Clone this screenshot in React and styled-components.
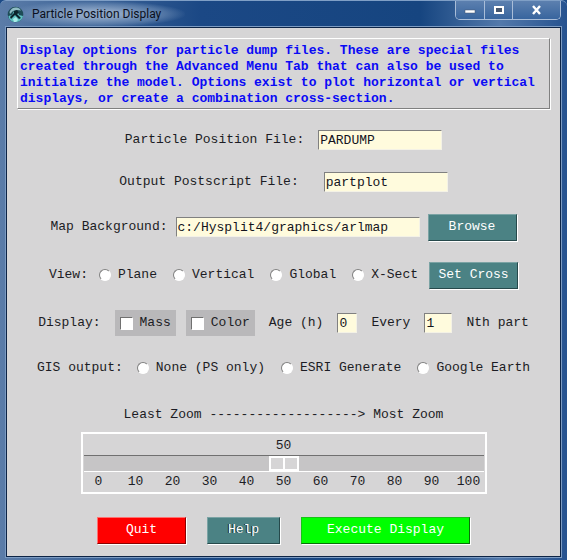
import React, { useState } from 'react';
import styled, { createGlobalStyle } from 'styled-components';

const GlobalStyle = createGlobalStyle`
  *, *::before, *::after { box-sizing: border-box; }
  body { margin: 0; background: #1c4a86; }
  button, input, output { font: inherit; }
`;

const face = '#d6d5d6';
const mono = '"Liberation Mono", "Courier New", monospace';

const Frame = styled.div`
  min-height: 100vh;
  display: flex;
  flex-direction: column;
  padding: 0 6px 3px;
  border-top: 1px solid #7f9fc6;
  border-radius: 6px 6px 0 0;
  background: linear-gradient(90deg, #5b7ca8 0, #1b4885 200px, #164580 420px, #5379ab 500px, #26528f 100%);
  font: 13px/16px ${mono};
  color: #1c1c24;
`;

const TitleBar = styled.header`
  display: flex;
  align-items: flex-start;
  justify-content: space-between;
  height: 26px;
`;

const Title = styled.h1`
  display: flex;
  align-items: center;
  gap: 8px;
  height: 26px;
  margin: 0;
  padding: 0 24px 0 1px;
  background: radial-gradient(ellipse at center, #8ca5c6 20%, #6b8bb499 55%, transparent 72%);
  font: 12px/16px Roboto, "Noto Sans", sans-serif;
  color: #0b1020;
`;

const Controls = styled.div`
  display: flex;
  height: 19px;
  border: 1px solid #a9bdd8;
  border-top: 0;
  border-radius: 0 0 5px 5px;
  overflow: hidden;
`;

const Control = styled.button`
  display: grid;
  place-items: center;
  width: ${(p) => (p.$wide ? 48 : 28)}px;
  padding: 0;
  border: 0;
  border-left: ${(p) => (p.$first ? '0' : '1px solid #a9bdd8')};
  background: linear-gradient(#5c80af, #38659e);
`;

const Client = styled.main`
  flex: 1;
  display: flex;
  flex-direction: column;
  gap: 20px;
  padding: 10px;
  border: 1px solid #0d2446;
  outline: 1px solid #7c9bc2;
  background: ${face};
`;

const Banner = styled.p`
  margin: 0;
  padding: 4px 2px 1px;
  border: 1px solid;
  border-color: #fff #808080 #808080 #fff;
  box-shadow: 1px 1px 0 #fff;
  font-weight: bold;
  color: #0a0af5;
`;

const Row = styled.div`
  display: flex;
  align-items: center;
  justify-content: center;
  gap: ${(p) => p.$gap}px;
  min-height: ${(p) => (p.$tall ? 28 : 22)}px;
  white-space: nowrap;
`;

const RadioGroup = styled.fieldset`
  display: flex;
  align-items: center;
  gap: 16px;
  margin: 0;
  padding: 0;
  border: 0;
`;

const Choice = styled.label`
  display: flex;
  align-items: center;
  gap: 7px;
`;

const TickChoice = styled(Choice)`
  height: 26px;
  padding: 0 5px;
  background: #b9b8ba;
`;

const Radio = styled.input`
  appearance: none;
  width: 12px;
  height: 12px;
  margin: 0;
  border: 1px solid;
  border-color: #808080 #fff #fff #808080;
  border-radius: 50%;
  background: #fff;
  &:checked { background: radial-gradient(#000 0 2px, #fff 3px); }
`;

const Tick = styled.input`
  appearance: none;
  width: 13px;
  height: 13px;
  margin: 0;
  border: 1px solid;
  border-color: #707070 #fff #fff #707070;
  background: #fff;
  &:checked { background: radial-gradient(#000 0 3px, #fff 4px); }
`;

const Ticks = styled.div`
  display: flex;
  gap: 10px;
`;

const Field = styled.input`
  width: ${(p) => p.$width}px;
  height: 20px;
  padding: 0 1px;
  border: 1px solid;
  border-color: #808080 #f4f2e6 #f4f2e6 #808080;
  border-radius: 0;
  background: #fffbdd;
  color: #14141c;
`;

const tones = {
  teal: ['#4b8284', '#7ba3a4', '#26494b'],
  red: ['#ff0000', '#ff7070', '#8c0000'],
  green: ['#00ff00', '#17c417', '#087008'],
};

const PushButton = styled.button`
  min-width: ${(p) => p.$width}px;
  height: 27px;
  padding: 0 7px;
  border: 1px solid;
  border-color: ${(p) => tones[p.$tone][1]} ${(p) => tones[p.$tone][2]} ${(p) => tones[p.$tone][2]} ${(p) => tones[p.$tone][1]};
  border-radius: 0;
  box-shadow: 1px 1px 0 #fff;
  background: ${(p) => tones[p.$tone][0]};
  color: #fff;
  text-shadow: ${(p) => (p.$shaded ? '-1px 0 0 #0c2022' : 'none')};
`;

const ZoomSection = styled.section`
  display: flex;
  flex-direction: column;
  align-items: center;
  gap: 9px;
  padding: 8px 0 2px;
`;

const ZoomLabel = styled.label`
  white-space: pre;
`;

const Scale = styled.div`
  width: 406px;
  max-width: 100%;
  padding: 4px 1px 2px;
  border: 2px solid #fff;
`;

const ScaleValue = styled.output`
  display: block;
  text-align: center;
`;

const Slider = styled.input`
  appearance: none;
  display: block;
  width: 100%;
  height: 17px;
  margin: 1px 0 2px;
  border: 1px solid;
  border-width: 1px 0;
  border-color: #707070 #fff #fff #707070;
  background: #c6c5c6;
  &::-webkit-slider-thumb {
    appearance: none;
    width: 30px;
    height: 15px;
    border: 2px solid #fff;
    background: linear-gradient(90deg, ${face} 12px, #fff 12px 14px, ${face} 14px);
  }
`;

const ScaleTicks = styled.div`
  display: flex;
  justify-content: space-between;
`;

const ScaleTick = styled.span`
  width: 30px;
  text-align: center;
`;

const views = ['Plane', 'Vertical', 'Global', 'X-Sect'];
const outputs = ['None (PS only)', 'ESRI Generate', 'Google Earth'];
const marks = [0, 10, 20, 30, 40, 50, 60, 70, 80, 90, 100];

function Radios({ name, options }) {
  return (
    <RadioGroup aria-label={name}>
      {options.map((option) => (
        <Choice key={option}>
          <Radio type="radio" name={name} value={option} />
          {option}
        </Choice>
      ))}
    </RadioGroup>
  );
}

function AppIcon() {
  return (
    <svg width="17" height="17" viewBox="0 0 17 17" aria-hidden="true">
      <circle cx="8.5" cy="8.5" r="7.8" fill="#1d4c57" />
      <path d="M2.5 6C4 2 7 1 10 1.5c2 .3 3 1.5 4 3L10 4 6 5 3 8Z" fill="#8fbcc4" />
      <path d="M1.5 10L5 9l2-4 4 1 1 3 4 1c-1 4-4 6-7.500 6S2 14 1.500 10Z" fill="#5ec0c1" />
      <path d="M7 5l3-1 2 3-2 1 4 4-2 1-4-4-4 4-1-2 4-4Z" fill="#0c242c" />
      <path d="M6 13l3-2 2 3-2 2H7Z" fill="#a9ebe6" />
    </svg>
  );
}

export default function App() {
  const [zoom, setZoom] = useState(50);
  return (
    <>
      <GlobalStyle />
      <Frame>
        <TitleBar>
          <Title><AppIcon />Particle Position Display</Title>
          <Controls>
            <Control $first aria-label="Minimize">
              <svg width="12" height="10"><rect x="1" y="5" width="10" height="3" fill="#fff" stroke="#45566f" strokeWidth=".5" /></svg>
            </Control>
            <Control aria-label="Maximize">
              <svg width="12" height="10"><rect x="2" y="2" width="8" height="6" fill="#45566f" stroke="#fff" strokeWidth="2" /></svg>
            </Control>
            <Control $wide aria-label="Close">
              <svg width="12" height="10"><path d="M2 1l7 8M9 1L2 9" stroke="#fff" strokeWidth="2.4" /></svg>
            </Control>
          </Controls>
        </TitleBar>
        <Client>
          <Banner>
            Display options for particle dump files. These are special files
            created through the Advanced Menu Tab that can also be used to
            initialize the model. Options exist to plot horizontal or vertical
            displays, or create a combination cross-section.
          </Banner>
          <Row $gap={14}>
            <label htmlFor="particle">Particle Position File:</label>
            <Field id="particle" $width={124} defaultValue="PARDUMP" />
          </Row>
          <Row $gap={25}>
            <label htmlFor="postscript">Output Postscript File:</label>
            <Field id="postscript" $width={124} defaultValue="partplot" />
          </Row>
          <Row $gap={8} $tall>
            <label htmlFor="map">Map Background:</label>
            <Field id="map" $width={244} defaultValue="c:/Hysplit4/graphics/arlmap" />
            <PushButton type="button" $tone="teal" $width={89}>Browse</PushButton>
          </Row>
          <Row $gap={11} $tall>
            <span>View:</span>
            <Radios name="View" options={views} />
            <PushButton type="button" $tone="teal" $width={89}>Set Cross</PushButton>
          </Row>
          <Row $gap={14} $tall>
            <span>Display:</span>
            <Ticks>
              <TickChoice><Tick type="checkbox" />Mass</TickChoice>
              <TickChoice><Tick type="checkbox" />Color</TickChoice>
            </Ticks>
            <label htmlFor="age">Age (h)</label>
            <Field id="age" $width={20} defaultValue="0" />
            <label htmlFor="every">Every</label>
            <Field id="every" $width={28} defaultValue="1" />
            <span>Nth part</span>
          </Row>
          <Row $gap={14}>
            <span>GIS output:</span>
            <Radios name="GIS output" options={outputs} />
          </Row>
          <ZoomSection>
            <ZoomLabel htmlFor="zoom">{'Least Zoom -------------------> Most Zoom'}</ZoomLabel>
            <Scale>
              <ScaleValue htmlFor="zoom">{zoom}</ScaleValue>
              <Slider id="zoom" type="range" min="0" max="100" value={zoom} onChange={(e) => setZoom(Number(e.target.value))} />
              <ScaleTicks>
                {marks.map((mark) => <ScaleTick key={mark}>{mark}</ScaleTick>)}
              </ScaleTicks>
            </Scale>
          </ZoomSection>
          <Row $gap={21} $tall>
            <PushButton type="button" $tone="red" $width={89}>Quit</PushButton>
            <PushButton type="button" $tone="teal" $width={73} $shaded>Help</PushButton>
            <PushButton type="button" $tone="green" $width={169}>Execute Display</PushButton>
          </Row>
        </Client>
      </Frame>
    </>
  );
}
